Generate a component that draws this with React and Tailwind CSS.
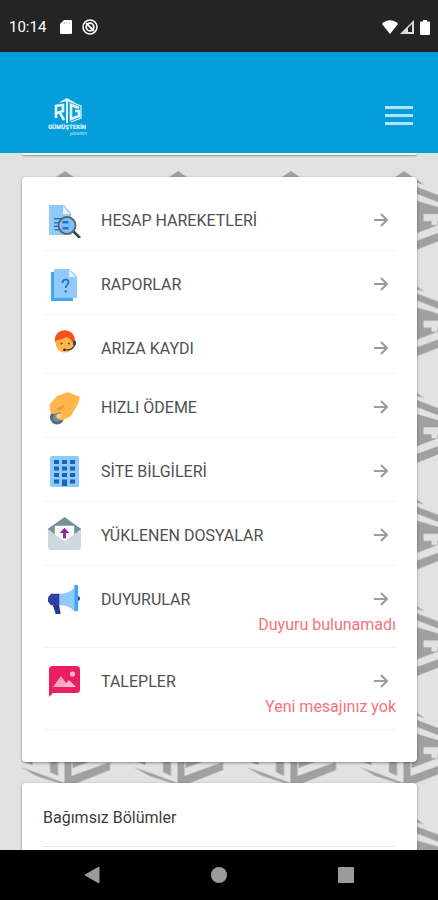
import React from "react";

const font = "font-['Roboto','Noto_Sans',sans-serif]";

function StatementIcon() {
  return (
    <svg viewBox="0 0 32 34" className="h-[34px] w-8" aria-hidden="true">
      <path d="M0 1h15l7 8v22H0z" fill="#90caf9" />
      <path d="M14 2l7 8h-7z" fill="#e1f5fe" />
      <path d="M5 14h7v1.500H5zM5 18h6v1.500H5zM5 21.500h6V23H5zM6 25h6v1.500H6z" fill="#1976d2" />
      <path d="M24 27l7 7" stroke="#37474f" strokeWidth="2.600" />
      <circle cx="18" cy="21.500" r="8.500" fill="#7fc0fa" stroke="#616161" strokeWidth="1.800" />
      <path d="M13.500 17h6v2.600h-6zM13.500 23h6v2.600h-6z" fill="#1976d2" />
    </svg>
  );
}

function ReportIcon() {
  return (
    <svg viewBox="0 0 32 34" className="h-[34px] w-8" aria-hidden="true">
      <path d="M2 4h22v29H2z" fill="#42a5f5" />
      <path d="M5 1h15l8 7v22H5z" fill="#90caf9" />
      <path d="M20 2l7 7h-7z" fill="#e1f5fe" />
      <path d="M13.500 15c0-4.500 6-4.500 6-.8 0 2.600-2.800 2.400-2.800 5.800" fill="none" stroke="#1976d2" strokeWidth="1.800" />
      <circle cx="16.700" cy="23.500" r="1.200" fill="#1976d2" />
    </svg>
  );
}

function SupportIcon() {
  return (
    <svg viewBox="0 0 32 34" className="h-[34px] w-8" aria-hidden="true">
      <ellipse cx="16" cy="12" rx="9.500" ry="10.500" fill="#ffa726" />
      <ellipse cx="16" cy="14" rx="8" ry="8" fill="#ffb74d" />
      <path d="M6 12C4-3 26-4 26 11l-3 1c-1-3-3-4-6-5-3 2-6 3-9 3z" fill="#f4511e" />
      <circle cx="12.500" cy="13.500" r="1.100" fill="#784719" />
      <circle cx="20" cy="13.500" r="1.100" fill="#784719" />
      <path d="M25.500 14c0 4-3 6-9 6" fill="none" stroke="#37474f" strokeWidth="1.200" />
      <rect x="24" y="10.500" width="3" height="5" rx="1.500" fill="#37474f" />
      <circle cx="15.500" cy="19.800" r="1.300" fill="#212121" />
    </svg>
  );
}

function PaymentIcon() {
  return (
    <svg viewBox="0 0 32 34" className="h-[34px] w-8" aria-hidden="true">
      <circle cx="8" cy="26.500" r="7" fill="#546e7a" />
      <circle cx="8" cy="26.500" r="4" fill="#78909c" />
      <path d="M0 14L8 5l11-4 12 5-2 7-7 12-8 4c-3 1-5-1-5-4l3-4-7 2c-3 0-5-3-4-9z" fill="#ffb74d" />
      <path d="M7 18l9-5-2 4-4 3z" fill="#f09a3e" />
      <circle cx="10" cy="25" r="2.600" fill="#ffcc80" />
    </svg>
  );
}

function BuildingIcon() {
  return (
    <svg viewBox="0 0 32 34" className="h-[34px] w-8" aria-hidden="true">
      <rect x="1" y="1" width="29" height="31" rx="1.500" fill="#90caf9" />
      <path
        d="M5 5h5v4h-5zM13 5h5v4h-5zM21 5h5v4h-5zM5 11.500h5v4h-5zM13 11.500h5v4h-5zM21 11.500h5v4h-5zM5 18h5v4h-5zM13 18h5v4h-5zM21 18h5v4h-5zM5 24.500h5v4h-5zM13 24.500h5V31h-5zM21 24.500h5v4h-5z"
        fill="#1565c0"
      />
    </svg>
  );
}

function UploadIcon() {
  return (
    <svg viewBox="0 0 34 34" className="mb-1.5 -ml-px size-[33px]" aria-hidden="true">
      <path d="M0 12L17 0l17 12v8H0z" fill="#78909c" />
      <path d="M7 9h20v12l-10 6-10-6z" fill="#fff" />
      <path d="M0 12.500L17 25l17-12.500V31a3 3 0 0 1-3 3H3a3 3 0 0 1-3-3z" fill="#cfd8dc" />
      <path d="M17 11l5 5.500h-3.500V22h-3v-5.500H12z" fill="#8e24aa" />
    </svg>
  );
}

function MegaphoneIcon() {
  return (
    <svg viewBox="0 0 34 34" className="-ml-px size-[33px]" aria-hidden="true">
      <path d="M4 19h7l2 12H8z" fill="#283593" />
      <path d="M3 10h9v12H3l-3-4v-4z" fill="#3040a5" />
      <circle cx="30.500" cy="15" r="2.500" fill="#283593" />
      <path d="M12 10c7 0 12-3 15-6v24c-4-4-8-6-15-6z" fill="#90caf9" />
      <rect x="27" y="1" width="4" height="27" rx="1" fill="#42a5f5" />
    </svg>
  );
}

function RequestIcon() {
  return (
    <svg viewBox="0 0 32 34" className="h-[34px] w-8" aria-hidden="true">
      <path d="M3.500 1h24A3.500 3.500 0 0 1 31 4.500v20a3.500 3.500 0 0 1-3.500 3.500H4l-4 4V4.500A3.500 3.500 0 0 1 3.500 1z" fill="#e91e63" />
      <path d="M4 22l8-11 8 11z" fill="#f8a5c2" />
      <path d="M14 22l6-7 7 7z" fill="#f8bbd0" />
      <circle cx="23.500" cy="9" r="2.600" fill="#f8bbd0" />
    </svg>
  );
}

function Arrow() {
  return (
    <svg viewBox="0 0 16 16" className="mr-[7px] mb-0.5 size-4 shrink-0" fill="none" stroke="#9a9a9a" strokeWidth="2" aria-hidden="true">
      <path d="M1 8h13M8 2l6 6-6 6" />
    </svg>
  );
}

const items = [
  { label: "HESAP HAREKETLERİ", Icon: StatementIcon },
  { label: "RAPORLAR", Icon: ReportIcon },
  { label: "ARIZA KAYDI", Icon: SupportIcon, short: true },
  { label: "HIZLI ÖDEME", Icon: PaymentIcon },
  { label: "SİTE BİLGİLERİ", Icon: BuildingIcon },
  { label: "YÜKLENEN DOSYALAR", Icon: UploadIcon },
  { label: "DUYURULAR", Icon: MegaphoneIcon, note: "Duyuru bulunamadı" },
  { label: "TALEPLER", Icon: RequestIcon, note: "Yeni mesajınız yok" },
];

function MenuRow({ label, Icon, note, short }) {
  return (
    <li className={`border-b border-[#f3f3f3] pt-[18px] ${short ? "pb-2" : note ? "pb-3" : "pb-[13px]"}`}>
      <a href="#" className="block">
        <span className="flex h-8 items-center">
          <span className={`flex w-[57px] shrink-0 items-center pl-[5px] ${short ? "pb-1" : ""}`}>
            <Icon />
          </span>
          <span className="flex-1 text-base leading-6 text-[#505050]">{label}</span>
          <Arrow />
        </span>
        {note && <span className="-mt-px block text-right text-base leading-5 text-[#f4737c]">{note}</span>}
      </a>
    </li>
  );
}

function Backdrop() {
  return (
    <svg className="absolute inset-0 h-full w-full" aria-hidden="true">
      <defs>
        <pattern id="cube" x="8.500" y="18" width="113" height="106.600" patternUnits="userSpaceOnUse">
          <g fill="#a0a0a0">
            <path d="M56.500 0L77 14 56.500 8 36 14z" />
            <path d="M69.500 16L101 28v7L69.500 23 56.500 18v-8z" />
            <path d="M64 29l5.500 1L101 39v11L69.500 62 64 64z" />
            <path d="M56 24h7v48l38.500-14v8L61 82h-5z" />
            <path d="M41.500 46h8v26l-8-4zM14 44l10 10v7l-8-3z" />
            <path d="M12 63l17 6 27 10v2L28 72z" />
          </g>
          <path d="M76 43h25v7H90v4h-6v-4h-8z" fill="#e2e2e2" />
        </pattern>
      </defs>
      <rect width="100%" height="100%" fill="url(#cube)" />
    </svg>
  );
}

function Logo() {
  return (
    <svg viewBox="0 0 42 38" className="h-[38px] w-[42px]" role="img" aria-label="Gümüştekin Yönetim">
      <path d="M12 5l9-5 9 5-9-2z" fill="#e3f4fd" />
      <g fill="none" stroke="#e3f4fd" strokeWidth="2.600">
        <path d="M10 20V8l7-1v6l-6 2M13.500 14l4.500 8" />
        <path d="M33 10l-8-3v14l8-3v-5h-4" />
        <path d="M21 2v23" strokeWidth="2" />
        <path d="M25 24l10-4V8L22 3" strokeWidth="1.200" />
      </g>
      <text x="21" y="31" textAnchor="middle" textRendering="geometricPrecision" fontSize="6" fontWeight="900" fill="#e3f4fd">GÜMÜŞTEKİN</text>
      <text x="41" y="37" textAnchor="end" textRendering="geometricPrecision" fontSize="5" fontStyle="italic" fill="#d5eefa">yönetim</text>
    </svg>
  );
}

export default function App() {
  return (
    <div className={`flex h-screen flex-col overflow-hidden bg-[#e2e2e2] ${font}`}>
      <div className="flex h-[52px] shrink-0 items-center justify-between bg-[#242424] pr-2 pl-[9px] text-white">
        <div className="flex items-center gap-3.5 pt-0.5">
          <span className="text-[15px] leading-5">10:14</span>
          <svg viewBox="0 0 12 14" className="h-3.5 w-3" aria-hidden="true">
            <path d="M4 0h7a1 1 0 0 1 1 1v12a1 1 0 0 1-1 1H1a1 1 0 0 1-1-1V4z" fill="#fff" />
            <path d="M4.500 2v2M7 2v2M9.500 2v2" stroke="#ccc" />
          </svg>
          <svg viewBox="0 0 16 16" className="-ml-1 size-4" fill="none" stroke="#fff" aria-hidden="true">
            <circle cx="8" cy="8" r="7" strokeWidth="1.500" />
            <circle cx="8" cy="8" r="3.800" strokeWidth="1.800" />
            <path d="M4 4l8 8" strokeWidth="1.800" />
          </svg>
        </div>
        <div className="flex items-center gap-0.5 pt-0.5">
          <svg viewBox="0 0 16 14" className="h-3.5 w-4" aria-hidden="true">
            <path d="M0 4C4-1 12-1 16 4L8 14z" fill="#fff" />
          </svg>
          <svg viewBox="0 0 14 14" className="h-3.5 w-3.5" aria-hidden="true">
            <path d="M0 14L14 0v14z" fill="#ddd" />
            <path d="M8 12V8l4-4v8z" fill="#242424" />
          </svg>
          <svg viewBox="0 0 10 15" className="ml-1 h-[15px] w-2.5" aria-hidden="true">
            <path d="M3 0h4v1.500h2a1 1 0 0 1 1 1V14a1 1 0 0 1-1 1H1a1 1 0 0 1-1-1V2.500a1 1 0 0 1 1-1h2z" fill="#fff" />
          </svg>
        </div>
      </div>

      <header className="flex h-[101px] shrink-0 items-center justify-between bg-[#049eda] pt-[25px] pr-[25px] pl-[46px]">
        <a href="#" className="pt-1">
          <Logo />
        </a>
        <button type="button" aria-label="Menü" className="flex w-7 flex-col gap-[5px]">
          <span className="h-[3px] bg-[#b4e2f6]" />
          <span className="h-[3px] bg-[#b4e2f6]" />
          <span className="h-[3px] bg-[#b4e2f6]" />
        </button>
      </header>

      <main className="relative min-h-0 flex-1 overflow-hidden">
        <Backdrop />
        <div className="relative flex flex-col pr-[21px] pl-[22px]">
          <div className="h-0.5 rounded-b-sm bg-white shadow-[0_1px_2px_rgba(0,0,0,0.4)]" />
          <nav className="mt-[22px] rounded-sm bg-white pt-2.5 pr-[21px] pb-8 pl-[22px] shadow-[0_1px_3px_rgba(0,0,0,0.4)]">
            <ul>
              {items.map((item) => (
                <MenuRow key={item.label} {...item} />
              ))}
            </ul>
          </nav>
          <section className="mt-[21px] rounded-sm bg-white px-[21px] pb-8 shadow-[0_1px_3px_rgba(0,0,0,0.4)]">
            <h2 className="border-b border-[#e6e6e6] pt-[23px] pb-4 text-base leading-6 text-[#3c3c3c]">
              Bağımsız Bölümler
            </h2>
          </section>
        </div>
      </main>

      <div className="flex h-[50px] shrink-0 items-center justify-around bg-black px-7">
        <button type="button" aria-label="Geri">
          <svg viewBox="0 0 16 18" className="h-[18px] w-4" aria-hidden="true">
            <path d="M15 1v16L1 9z" fill="#9b9b9b" stroke="#9b9b9b" strokeLinejoin="round" />
          </svg>
        </button>
        <button type="button" aria-label="Ana ekran" className="size-4 rounded-full bg-[#9b9b9b]" />
        <button type="button" aria-label="Son uygulamalar" className="size-4 rounded-[1px] bg-[#9b9b9b]" />
      </div>
    </div>
  );
}
